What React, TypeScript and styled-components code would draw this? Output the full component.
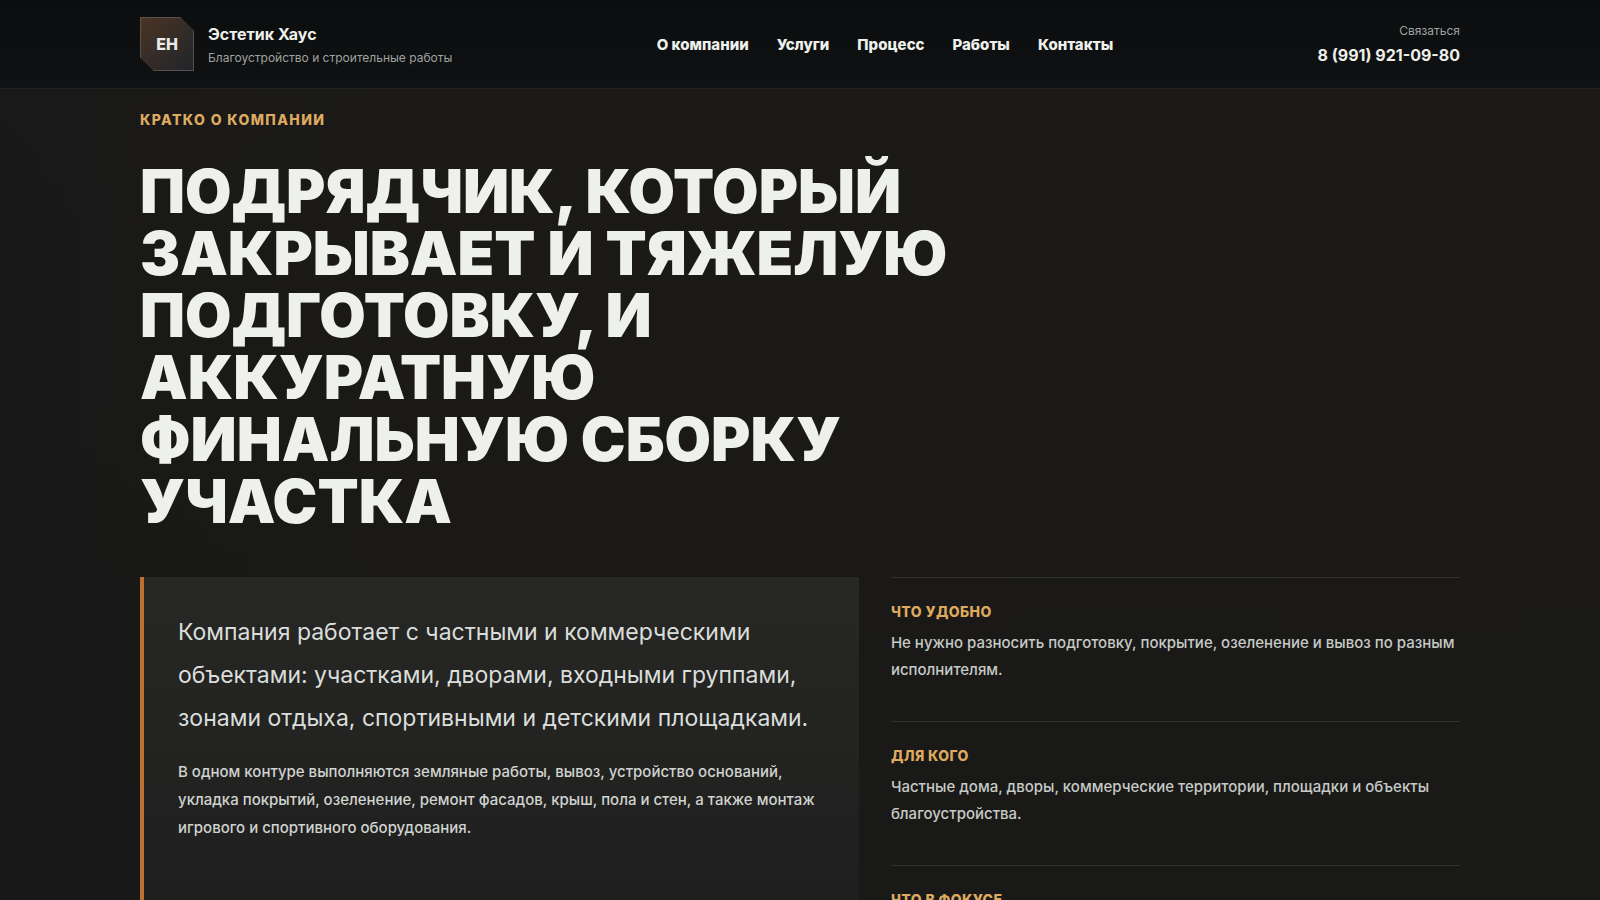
import React from 'react';
import styled, { createGlobalStyle } from 'styled-components';

const GlobalStyle = createGlobalStyle`
  *, *::before, *::after { box-sizing: border-box; }
  body {
    margin: 0;
    background: #191918;
    color: #eef0eb;
    font-family: Inter, "Liberation Sans", sans-serif;
  }
  h1, h2, h3, p { margin: 0; }
  a { color: inherit; text-decoration: none; }
`;

const Page = styled.div`
  min-height: 100vh;
  background:
    linear-gradient(90deg, rgba(23, 24, 25, 0.5) 0, rgba(23, 24, 25, 0) 25%),
    linear-gradient(180deg, #1c1a18 0, #1a1917 60%, #191918 100%);
`;

const Container = styled.div`
  width: 100%;
  max-width: 1368px;
  margin: 0 auto;
  padding: 0 24px;
`;

const Header = styled.header`
  position: sticky;
  top: 0;
  z-index: 10;
  background: linear-gradient(180deg, #0b0d0f 0, #0f1112 100%);
  border-bottom: 1px solid #222221;
`;

const HeaderRow = styled(Container)`
  display: flex;
  align-items: center;
  justify-content: space-between;
  padding-top: 17px;
  padding-bottom: 17px;
`;

const Brand = styled.a`
  display: flex;
  align-items: center;
  gap: 14px;
`;

const Mark = styled.span`
  display: grid;
  place-items: center;
  width: 54px;
  height: 54px;
  border: 1px solid #57514b;
  background: linear-gradient(135deg, #4b3425 0, #20252a 100%);
  clip-path: polygon(0 0, 75% 0, 100% 25%, 100% 100%, 25% 100%, 0 75%);
  color: #e8ebe7;
  font-size: 16px;
  font-weight: 800;
`;

const BrandText = styled.span`
  display: flex;
  flex-direction: column;
  gap: 2px;
  padding-top: 2px;
`;

const BrandName = styled.span`
  font-size: 16px;
  line-height: 24px;
  font-weight: 700;
`;

const Muted = styled.span`
  color: #9fa3a0;
  font-size: 12px;
  line-height: 20px;
`;

const Nav = styled.nav`
  display: flex;
  gap: 28px;
  padding-top: 2px;
`;

const NavLink = styled.a`
  font-size: 15px;
  line-height: 24px;
  font-weight: 800;
`;

const Contact = styled.a`
  display: flex;
  flex-direction: column;
  align-items: flex-end;
  gap: 2px;
`;

const Phone = styled.span`
  font-size: 16px;
  line-height: 24px;
  font-weight: 700;
`;

const Section = styled(Container).attrs({ as: 'main' })`
  padding-top: 19px;
`;

const Eyebrow = styled.p`
  color: #deaa5f;
  font-size: 14px;
  line-height: 24px;
  font-weight: 800;
  letter-spacing: 0.1em;
  text-transform: uppercase;
`;

const Title = styled.h1`
  max-width: 880px;
  margin-top: 28px;
  font-size: 60px;
  line-height: 62px;
  font-weight: 900;
  text-transform: uppercase;
`;

const Columns = styled.div`
  display: grid;
  grid-template-columns: 1.2fr 0.95fr;
  gap: 32px;
  margin-top: 45px;
`;

const Card = styled.article`
  padding: 34px;
  border-left: 4px solid #bd7032;
  background: linear-gradient(180deg, #272725 0, #1e1e1e 100%);
`;

const Lead = styled.p`
  color: #dadeda;
  font-size: 23px;
  line-height: 43px;
`;

const Text = styled.p`
  margin-top: 18px;
  color: #d0d3cf;
  font-size: 15px;
  line-height: 28px;
  font-weight: 500;
`;

const Facts = styled.div`
  display: flex;
  flex-direction: column;
  gap: 16px;
`;

const Fact = styled.section`
  padding: 22px 0;
  border-top: 1px solid #30302e;
`;

const FactTitle = styled.h2`
  color: #deaa5f;
  font-size: 14px;
  line-height: 24px;
  font-weight: 800;
  letter-spacing: 0.03em;
  text-transform: uppercase;
`;

const FactText = styled.p`
  margin-top: 5px;
  color: #c6cac6;
  font-size: 15px;
  line-height: 27px;
  font-weight: 500;
`;

const links = [
  ['О компании', '#about'],
  ['Услуги', '#services'],
  ['Процесс', '#process'],
  ['Работы', '#works'],
  ['Контакты', '#contacts'],
];

const facts = [
  {
    title: 'Что удобно',
    text: 'Не нужно разносить подготовку, покрытие, озеленение и вывоз по разным исполнителям.',
  },
  {
    title: 'Для кого',
    text: 'Частные дома, дворы, коммерческие территории, площадки и объекты благоустройства.',
  },
  { title: 'Что в фокусе' },
];

export default function App() {
  return (
    <Page>
      <GlobalStyle />
      <Header>
        <HeaderRow>
          <Brand href="#top">
            <Mark>EH</Mark>
            <BrandText>
              <BrandName>Эстетик Хаус</BrandName>
              <Muted>Благоустройство и строительные работы</Muted>
            </BrandText>
          </Brand>
          <Nav>
            {links.map(([label, href]) => (
              <NavLink key={href} href={href}>{label}</NavLink>
            ))}
          </Nav>
          <Contact href="tel:+79919210980">
            <Muted>Связаться</Muted>
            <Phone>8 (991) 921-09-80</Phone>
          </Contact>
        </HeaderRow>
      </Header>
      <Section id="about">
        <Eyebrow>Кратко о компании</Eyebrow>
        <Title>Подрядчик, который закрывает и тяжелую подготовку, и аккуратную финальную сборку участка</Title>
        <Columns>
          <Card>
            <Lead>
              Компания работает с частными и коммерческими объектами: участками, дворами, входными группами,
              зонами отдыха, спортивными и детскими площадками.
            </Lead>
            <Text>
              В одном контуре выполняются земляные работы, вывоз, устройство оснований, укладка покрытий,
              озеленение, ремонт фасадов, крыш, пола и стен, а также монтаж игрового и спортивного оборудования.
            </Text>
          </Card>
          <Facts>
            {facts.map((fact) => (
              <Fact key={fact.title}>
                <FactTitle>{fact.title}</FactTitle>
                {fact.text && <FactText>{fact.text}</FactText>}
              </Fact>
            ))}
          </Facts>
        </Columns>
      </Section>
    </Page>
  );
}
